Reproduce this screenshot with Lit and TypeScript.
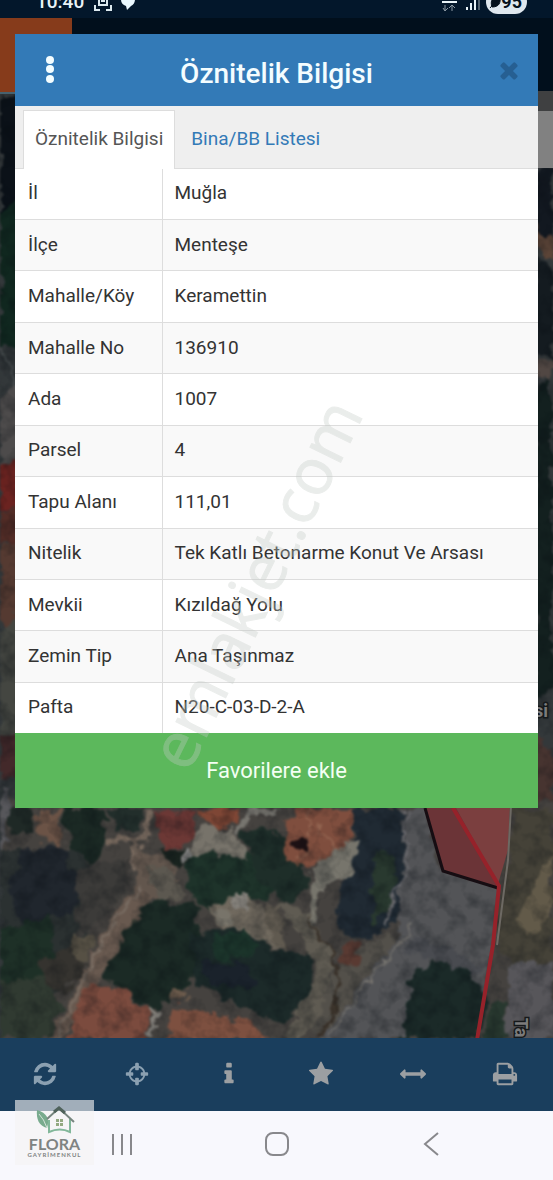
import { LitElement, html, svg, css } from "lit";
import { customElement, property, state } from "lit/decorators.js";

const ICONS: Record<string, string> = {
  refresh:
    "M1639 1056q0 5-1 7-64 268-268 434.500t-478 166.500q-146 0-282.500-55t-243.500-157l-129 129q-19 19-45 19t-45-19-19-45v-448q0-26 19-45t45-19h448q26 0 45 19t19 45-19 45l-137 137q71 66 161 102t187 36q134 0 250-65t186-179q11-17 53-117 8-23 30-23h192q13 0 22.500 9.500t9.500 22.500zm25-800v448q0 26-19 45t-45 19h-448q-26 0-45-19t-19-45 19-45l138-138q-148-137-349-137-134 0-250 65t-186 179q-11 17-53 117-8 23-30 23h-199q-13 0-22.500-9.500t-9.500-22.500v-7q65-268 270-434.500t480-166.500q146 0 284 55.500t245 156.500l130-129q19-19 45-19t45 19 19 45z",
  crosshairs:
    "M1325 1024h-109q-26 0-45-19t-19-45v-128q0-26 19-45t45-19h109q-32-108-112.500-188.500t-188.500-112.500v109q0 26-19 45t-45 19h-128q-26 0-45-19t-19-45v-109q-108 32-188.500 112.500t-112.500 188.500h109q26 0 45 19t19 45v128q0 26-19 45t-45 19h-109q32 108 112.500 188.500t188.500 112.500v-109q0-26 19-45t45-19h128q26 0 45 19t19 45v109q108-32 188.500-112.500t112.500-188.500zm339-192v128q0 26-19 45t-45 19h-143q-37 161-154.500 278.500t-278.500 154.500v143q0 26-19 45t-45 19h-128q-26 0-45-19t-19-45v-143q-161-37-278.500-154.500t-154.500-278.500h-143q-26 0-45-19t-19-45v-128q0-26 19-45t45-19h143q37-161 154.500-278.500t278.500-154.500v-143q0-26 19-45t45-19h128q26 0 45 19t19 45v143q161 37 278.500 154.500t154.500 278.500h143q26 0 45 19t19 45z",
  info:
    "M1216 1344v128q0 26-19 45t-45 19h-512q-26 0-45-19t-19-45v-128q0-26 19-45t45-19h64v-384h-64q-26 0-45-19t-19-45v-128q0-26 19-45t45-19h384q26 0 45 19t19 45v576h64q26 0 45 19t19 45zm-128-1152v192q0 26-19 45t-45 19h-256q-26 0-45-19t-19-45v-192q0-26 19-45t45-19h256q26 0 45 19t19 45z",
  star:
    "M1728 647q0 22-26 48l-363 354 86 500q1 7 1 20 0 21-10.500 35.500t-30.500 14.500q-19 0-40-12l-449-236-449 236q-22 12-40 12-21 0-31.500-14.500t-10.500-35.500q0-6 2-20l86-500-364-354q-25-27-25-48 0-37 56-46l502-73 225-455q19-41 49-41t49 41l225 455 502 73q56 9 56 46z",
  measure:
    "M1792 896q0 26-19 45l-256 256q-19 19-45 19t-45-19-19-45v-128h-1024v128q0 26-19 45t-45 19-45-19l-256-256q-19-19-19-45t19-45l256-256q19-19 45-19t45 19 19 45v128h1024v-128q0-26 19-45t45-19 45 19l256 256q19 19 19 45z",
  print:
    "M448 1536h896v-256h-896v256zm0-640h896v-384h-160q-40 0-68-28t-28-68v-160h-640v640zm1152 64q0-26-19-45t-45-19-45 19-19 45 19 45 45 19 45-19 19-45zm128 0v416q0 13-9.500 22.500t-22.500 9.500h-224v160q0 40-28 68t-68 28h-960q-40 0-68-28t-28-68v-160h-224q-13 0-22.500-9.500t-9.500-22.500v-416q0-79 56.500-135.500t135.500-56.500h64v-544q0-40 28-68t68-28h672q40 0 88 20t76 48l152 152q28 28 48 76t20 88v256h64q79 0 135.500 56.500t56.500 135.500z",
  close:
    "M1490 1322q0 40-28 68l-136 136q-28 28-68 28t-68-28l-294-294-294 294q-28 28-68 28t-68-28l-136-136q-28-28-28-68t28-68l294-294-294-294q-28-28-28-68t28-68l136-136q28-28 68-28t68 28l294 294 294-294q28-28 68-28t68 28l136 136q28 28 28 68t-28 68l-294 294 294 294q28 28 28 68z",
};

@customElement("fa-icon")
class FaIcon extends LitElement {
  @property() name = "info";

  static styles = css`
    :host { display: inline-flex; width: 26px; height: 26px; }
    .glyph { width: 100%; height: 100%; fill: currentColor; }
  `;

  render() {
    return html`<svg class="glyph" viewBox="0 0 1792 1792" aria-hidden="true"><path d=${ICONS[this.name]}></path></svg>`;
  }
}

@customElement("satellite-map")
class SatelliteMap extends LitElement {
  static styles = css`
    :host { display: block; background: #33383a; }
    .map { display: block; width: 100%; height: 100%; }
    .label { font: 700 18px Roboto, sans-serif; fill: #7b7b7b; stroke: #16191b; stroke-width: 3px; paint-order: stroke; }
  `;

  private patches: Array<[string, string]> = [
    // left and right strips beside the card
    ["#0b1118", "0,94 20,94 20,215 0,230"],
    ["#10271f", "0,215 20,200 20,350 0,345"],
    ["#4d4b4b", "0,400 20,380 20,470 0,465"],
    ["#6b2320", "0,465 20,460 20,510 0,510"],
    ["#522c26", "0,512 20,508 20,545 0,545"],
    ["#553a31", "0,548 20,542 20,620 0,640"],
    ["#444641", "0,625 20,610 20,740 0,745"],
    ["#43292a", "0,735 20,732 20,776 0,778"],
    ["#121820", "534,168 553,168 553,240 534,230"],
    ["#5b4437", "534,225 553,240 553,262 534,245"],
    ["#141b20", "534,260 553,265 553,360 534,350"],
    ["#514743", "534,362 553,362 553,380 534,372"],
    ["#13201f", "534,385 553,380 553,690 534,700"],
    ["#473430", "534,730 553,760 553,810 534,810"],
    // ground and tracks
    ["#45423f", "0,800 560,800 560,1045 0,1045"],
    ["#57575b", "0,785 8,785 7,840 0,850"],
    ["#2b3131", "0,850 75,850 110,880 90,930 60,990 0,1010"],
    ["#20262d", "22,850 60,845 78,880 72,915 20,925 10,890"],
    ["#1e3027", "0,930 50,915 55,960 25,1000 0,985"],
    ["#303a31", "0,985 45,975 60,1010 50,1040 0,1040"],
    ["#35332f", "40,960 78,950 84,975 62,992 45,985"],
    ["#3c3b39", "75,870 125,860 128,885 100,920 78,940"],
    ["#68594f", "136,880 152,886 148,908 125,945 95,985 62,1040 50,1040 78,985 98,940"],
    ["#62564d", "133,850 165,855 180,880 160,900 135,890"],
    ["#5c5850", "150,868 176,872 182,898 158,902"],
    ["#565044", "75,930 95,935 85,965 70,950"],
    ["#6b5346", "36,812 62,812 60,845 42,842"],
    ["#1f2926", "4,808 34,808 34,830 14,835"],
    ["#1b2924", "62,808 100,808 108,838 95,865 72,850"],
    ["#222e2b", "103,808 145,808 138,828 118,832"],
    // tree masses
    ["#1b2a25", "155,900 195,905 205,950 190,985 155,1008 120,990 105,975 130,925"],
    ["#1e332a", "190,855 245,850 280,880 275,895 235,905 210,915 185,890"],
    ["#1a241f", "156,848 188,850 192,862 172,866"],
    ["#1e2e29", "240,832 265,828 300,845 308,885 285,905 260,880"],
    ["#1c2a29", "190,935 245,925 275,950 312,955 308,1005 280,1025 240,1005 195,985"],
    ["#1c352b", "215,935 250,930 258,950 232,962 212,955"],
    ["#1a222b", "195,962 250,965 260,985 215,988"],
    ["#202a33", "352,808 402,808 404,858 398,920 370,940 340,930 338,890 355,855"],
    ["#29392f", "375,850 398,860 392,905 372,925"],
    // paved lots
    ["#70695e", "205,905 240,895 265,910 280,950 245,930 215,925"],
    ["#605a50", "262,900 282,908 284,950 272,942"],
    ["#77736a", "196,830 215,822 240,840 245,860 215,852 190,858"],
    ["#5f5b52", "280,905 310,915 335,955 325,1010 305,1038 285,1038 318,970"],
    ["#77756c", "315,860 345,842 360,840 350,875 325,885 315,920 308,918"],
    ["#53504a", "340,960 385,935 395,945 330,1030 310,1035"],
    // rooftops
    ["#6c3835", "152,812 196,810 193,842 165,850"],
    ["#7e4635", "198,808 242,808 232,828 200,822"],
    ["#7f4e3e", "296,808 354,808 348,840 325,860 300,868 286,858 284,835"],
    ["#7b4b3e", "85,986 120,990 154,1012 148,1040 68,1040"],
    ["#7d5040", "174,1005 205,1010 248,1022 272,1040 165,1040"],
    ["#593a32", "350,935 362,945 355,966 337,960"],
    // road
    ["#535457", "404,808 425,808 440,868 498,888 490,955 480,1040 395,1040 350,1040 320,1040 398,938"],
    ["#494b50", "412,935 488,965 470,975 405,950"],
    ["#57565a", "510,960 553,965 553,1040 505,1040"],
    // verge to the right of the parcel
    ["#454238", "514,808 553,808 553,962 510,965 494,935 506,880"],
    ["#625a49", "532,880 553,850 553,915 530,938 518,925"],
    ["#1b2a28", "408,1005 412,975 438,960 470,972 488,1000 480,1040 398,1040"],
    ["#28382f", "490,1005 505,1000 508,1040 484,1040"],
  ];

  render() {
    return html`
      <svg class="map" viewBox="0 0 553 1040" preserveAspectRatio="xMidYMin slice" role="img" aria-label="Harita">
        <defs>
          <filter id="rough" x="0" y="0" width="100%" height="100%" color-interpolation-filters="sRGB">
            <feTurbulence type="fractalNoise" baseFrequency="0.07" numOctaves="3" seed="8" result="n"></feTurbulence>
            <feDisplacementMap in="SourceGraphic" in2="n" scale="18" xChannelSelector="R" yChannelSelector="G"></feDisplacementMap>
            <feGaussianBlur stdDeviation="1"></feGaussianBlur>
          </filter>
          <filter id="shade" x="0" y="0" width="100%" height="100%" color-interpolation-filters="sRGB">
            <feTurbulence type="fractalNoise" baseFrequency="0.06" numOctaves="3" seed="21"></feTurbulence>
            <feColorMatrix values="0 0 0 0 0.02  0 0 0 0 0.04  0 0 0 0 0.06  2.4 0 0 0 -1"></feColorMatrix>
          </filter>
        </defs>
        <g filter="url(#rough)">
          <rect width="553" height="1040" fill="#33383a"></rect>
          ${this.patches.map(([fill, points]) => svg`<polygon fill=${fill} points=${points}></polygon>`)}
          <g fill="none" stroke-linecap="round">
            <path d="M0 345Q12 365 16 395" stroke="#5a6061" stroke-width="2"></path>
            <path d="M140 885L100 945 58 1036" stroke="#786c62" stroke-width="3"></path>
            <path d="M148 812L146 835 110 842M140 835L133 866" stroke="#75675c" stroke-width="5"></path>
            <path d="M250 810L236 832M276 812L255 812" stroke="#77756f" stroke-width="6"></path>
            <path d="M308 920Q345 960 338 1000L323 1036" stroke="#393129" stroke-width="3"></path>
            <path d="M412 925L330 1034" stroke="#77746f" stroke-width="2"></path>
            <path d="M404 812L405 870 385 925" stroke="#66666a" stroke-width="3"></path>
            <path d="M312 810L300 860M318 825L338 850" stroke="#936551" stroke-width="2"></path>
            <path d="M152 1008L158 1016 152 1036" stroke="#85827c" stroke-width="4"></path>
          </g>
          <circle cx="299" cy="843" r="6" fill="#1c1114"></circle>
          <circle cx="240" cy="902" r="7" fill="#8b8780"></circle>
          <circle cx="222" cy="916" r="9" fill="#78746a"></circle>
          <circle cx="186" cy="856" r="5" fill="#8a8a88"></circle>
          <circle cx="178" cy="994" r="8" fill="#6c5b4c"></circle>
        </g>
        <rect y="94" width="553" height="946" filter="url(#shade)" opacity="0.3"></rect>
        <polygon fill="#6b3437" points="425,806 460,806 498,888 443,871"></polygon>
        <polygon fill="#7b3f3f" points="455,806 510,806 508,850 498,884"></polygon>
        <path d="M511 806L508 860 497 945" fill="none" stroke="#6d6963" stroke-width="2"></path>
        <rect width="553" height="94" fill="#010f1c"></rect>
        <rect width="553" height="18" fill="#03172b"></rect>
        <rect y="18" width="72" height="74" fill="#863b1b"></rect>
        <rect y="92" width="72" height="2" fill="#46616e"></rect>
        <rect x="530" y="91" width="30" height="20" rx="5" fill="#3f4041"></rect>
        <rect x="530" y="111" width="30" height="57" fill="#818181"></rect>
        <path d="M425 808L443 871 498 888" fill="none" stroke="#160d12" stroke-width="3"></path>
        <path d="M453 808L499 886 493 945 477 1040" fill="none" stroke="#96222a" stroke-width="4"></path>
        <text class="label" x="534" y="717">si</text>
        <text class="label" transform="translate(515 1018) rotate(90)">Ta</text>
      </svg>
    `;
  }
}

@customElement("app-root")
class AppRoot extends LitElement {
  @state() private tab = 0;

  private rows: Array<[string, string]> = [
    ["İl", "Muğla"],
    ["İlçe", "Menteşe"],
    ["Mahalle/Köy", "Keramettin"],
    ["Mahalle No", "136910"],
    ["Ada", "1007"],
    ["Parsel", "4"],
    ["Tapu Alanı", "111,01"],
    ["Nitelik", "Tek Katlı Betonarme Konut Ve Arsası"],
    ["Mevkii", "Kızıldağ Yolu"],
    ["Zemin Tip", "Ana Taşınmaz"],
    ["Pafta", "N20-C-03-D-2-A"],
  ];

  private tools: Array<[string, string]> = [
    ["refresh", "Yenile"],
    ["crosshairs", "Konum"],
    ["info", "Bilgi"],
    ["star", "Favoriler"],
    ["measure", "Ölçüm"],
    ["print", "Yazdır"],
  ];

  static styles = css`
    :host { display: block; font-family: Roboto, "Noto Sans", sans-serif; color: #333; }
    * { box-sizing: border-box; }
    button { font: inherit; color: inherit; border: 0; padding: 0; background: none; cursor: pointer; }
    .screen { position: relative; display: flex; flex-direction: column; min-height: 100vh; overflow: hidden; }
    .map { position: absolute; inset: 0 0 142px; }

    .status { position: relative; display: flex; align-items: center; height: 28px; margin-top: -10px; padding: 0 26px 5px 36px; color: #e9f3f8; }
    .clock { font-size: 19px; line-height: 24px; font-weight: 500; }
    .glyphs { margin-left: 10px; }
    .signal { margin-left: auto; }
    .battery { display: flex; align-items: center; height: 24px; margin-left: 6px; padding: 0 5px 0 3px; border-radius: 12px; background: #dfe7ee; color: #06111c; font-size: 18px; font-weight: 700; }

    .card { position: relative; margin: 16px 15px 0; background: #fff; }
    .head { display: grid; grid-template-columns: 40px 1fr 40px; align-items: center; height: 72px; padding: 0 9px 0 15px; background: #337ab7; color: #f4fdff; }
    .more, .close { display: grid; place-items: center; height: 40px; }
    .close { color: #265f92; }
    .title { margin: 0; padding: 8px 6px 0 0; text-align: center; font-size: 28px; line-height: 32px; font-weight: 500; }
    .tabs { display: flex; height: 63px; padding: 4px 8px 0; background: #efefef; border-bottom: 1px solid #ddd; }
    .tab { padding: 0 12px 2px; border: 1px solid transparent; border-bottom: 0; font-size: 19px; line-height: 24px; color: #337ab7; white-space: nowrap; }
    .tab + .tab { margin-left: 3px; }
    .tab.active { margin-bottom: -1px; padding: 0 11px 3px; background: #fff; border-color: #ddd; color: #555; }
    .table { width: 100%; height: 564px; border-collapse: collapse; font-size: 19px; line-height: 24px; }
    .row:nth-child(even) { background: #f9f9f9; }
    .row + .row { border-top: 1px solid #ddd; }
    .key, .value { padding: 0 12px 1px; text-align: left; font-weight: 400; }
    .key { width: 147px; padding-left: 13px; border-right: 1px solid #ddd; white-space: nowrap; }
    .favorite { display: block; width: 100%; height: 75px; background: #5cb85c; color: #f3fff3; font-size: 22px; line-height: 28px; }

    .tools { position: relative; display: grid; grid-template-columns: repeat(6, 1fr); height: 73px; margin-top: auto; padding-right: 2px; background: #1a3e5d; color: #8ba0b1; }
    .tool { display: grid; place-items: center; padding: 0 1px 2px 0; }
    .tool:nth-child(n + 3) { color: #9c9fa2; }
    .nav { position: relative; display: grid; grid-template-columns: repeat(3, 1fr); height: 69px; padding: 0 8% 3px; background: #f8f8fd; color: #88888c; }
    .key-button { display: grid; place-items: center; }

    .overlay { position: absolute; left: 50%; top: 0; width: 553px; height: 1180px; transform: translateX(-50%); pointer-events: none; }
    .watermark { font: 400 64px "Open Sans", "Noto Sans", sans-serif; fill: #c4cbc6; stroke: #c4cbc6; stroke-width: 1px; opacity: 0.34; }
    .brand { position: absolute; left: 15px; bottom: 15px; display: flex; flex-direction: column; align-items: center; width: 79px; height: 65px; padding-top: 6px; background: rgba(245, 243, 243, 0.62); color: #7f8382; }
    .brand-name { margin-top: 2px; font: 700 16px/14px Lato, sans-serif; }
    .brand-sub { font: 700 6px/8px Lato, sans-serif; letter-spacing: 1px; }
  `;

  render() {
    return html`
      <div class="screen">
        <satellite-map class="map"></satellite-map>

        <header class="status">
          <span class="clock">10:40</span>
          <svg class="glyphs" width="46" height="24" viewBox="0 0 46 24" fill="none" stroke="#dce9ef" stroke-width="2" aria-hidden="true">
            <path d="M1 8V2h5M12 2h5v6M17 15v5h-5M6 20H1v-5M5 7h8v8H5zM7 11h4"></path>
            <path d="M27 9a7 7 0 1 1 10 7l-4 4-1-4a7 7 0 0 1-5-7z" fill="#eaf8ff" stroke="none"></path>
          </svg>
          <svg class="signal" width="39" height="24" viewBox="0 0 39 24" fill="none" stroke="#e9f3f8" stroke-width="2" aria-hidden="true">
            <path d="M4 21v-6M2 18l2 3 3-3M11 21v-6M8 18l3-3 3 3" stroke="#8b98a3" stroke-width="1"></path>
            <path d="M1 12h15"></path>
            <path d="M26 20v-3M30 20v-7M34 20V8"></path>
            <path d="M38 20V4" stroke="#52616e"></path>
          </svg>
          <span class="battery">
            <svg width="12" height="14" viewBox="0 0 12 14" aria-hidden="true"><path d="M11 1C3 2 1 6 3 12 10 12 12 8 11 1zM1 13L8 5" fill="#06111c" stroke="#06111c"></path></svg>
            95
          </span>
        </header>

        <main class="card">
          <div class="head">
            <button class="more" aria-label="Menü">
              <svg width="10" height="28" viewBox="0 0 10 28" fill="currentColor" aria-hidden="true">
                <circle cx="5" cy="4" r="4"></circle><circle cx="5" cy="13" r="4"></circle><circle cx="5" cy="23" r="4"></circle>
              </svg>
            </button>
            <h1 class="title">Öznitelik Bilgisi</h1>
            <button class="close" aria-label="Kapat"><fa-icon name="close"></fa-icon></button>
          </div>
          <div class="tabs" role="tablist">
            ${["Öznitelik Bilgisi", "Bina/BB Listesi"].map(
              (label, i) => html`<button
                class="tab ${this.tab === i ? "active" : ""}"
                role="tab"
                aria-selected=${this.tab === i ? "true" : "false"}
                @click=${() => (this.tab = i)}
              >${label}</button>`
            )}
          </div>
          <table class="table">
            <tbody>
              ${this.rows.map(
                ([key, value]) => html`<tr class="row"><th class="key" scope="row">${key}</th><td class="value">${value}</td></tr>`
              )}
            </tbody>
          </table>
          <button class="favorite">Favorilere ekle</button>
        </main>

        <nav class="tools" aria-label="Harita araçları">
          ${this.tools.map(([icon, label]) => html`<button class="tool" aria-label=${label}><fa-icon name=${icon}></fa-icon></button>`)}
        </nav>

        <nav class="nav" aria-label="Sistem">
          <button class="key-button" aria-label="Son uygulamalar">
            <svg width="22" height="24" viewBox="0 0 22 24" stroke="currentColor" stroke-width="2"><path d="M2 2v21M11 2v21M20 2v21"></path></svg>
          </button>
          <button class="key-button" aria-label="Ana ekran">
            <svg width="24" height="24" viewBox="0 0 24 24" fill="none" stroke="currentColor" stroke-width="2"><rect x="1" y="1" width="22" height="22" rx="7"></rect></svg>
          </button>
          <button class="key-button" aria-label="Geri">
            <svg width="16" height="24" viewBox="0 0 16 24" fill="none" stroke="currentColor" stroke-width="2"><path d="M15 1L2 12l13 11"></path></svg>
          </button>
        </nav>

        <svg class="overlay" viewBox="0 0 553 1180" aria-hidden="true">
          <text class="watermark" transform="translate(188 774) rotate(-64)">emlakjet.com</text>
        </svg>
        <div class="brand">
          <svg width="40" height="29" viewBox="0 0 40 29" fill="none" aria-hidden="true">
            <path d="M2 4C12 7 15 13 12 22 4 20 1 13 2 4z" fill="#79ab8e"></path>
            <path d="M4 8Q9 13 12 22" stroke="#d4e2d8"></path>
            <path d="M14 14v12Q25 21 35 26V13" stroke="#82b79a" stroke-width="2"></path>
            <path d="M12 13L24 2l15 14" stroke="#77857f" stroke-width="2"></path>
            <path d="M19 6l5-4 6 5" stroke="#4f625b" stroke-width="3"></path>
            <path d="M21 13h3v3h-3zM25 13h3v3h-3zM21 17h3v3h-3zM25 17h3v3h-3z" fill="#93a981"></path>
          </svg>
          <span class="brand-name">FLORA</span>
          <span class="brand-sub">GAYRİMENKUL</span>
        </div>
      </div>
    `;
  }
}
